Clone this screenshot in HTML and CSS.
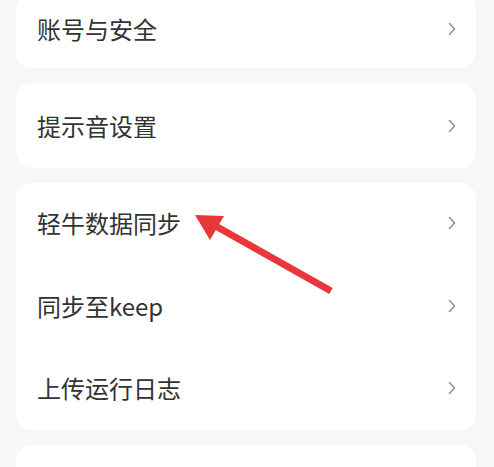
FILE: index.html
```html
<!DOCTYPE html>
<html>
<head>
    <meta charset="UTF-8">
    <meta name="viewport" content="width=device-width, initial-scale=1.0">
    <title>设置</title>
    <link rel="stylesheet" href="styles.css">
</head>
<body>
    <div class="settings">
        <div class="card first">
            <div class="row tall-first">
                <span class="label">账号与安全</span>
                <svg class="chevron" viewBox="0 0 8 14"><polyline points="1.5,1.5 6.5,7 1.5,12.5"/></svg>
            </div>
        </div>
        <div class="card">
            <div class="row tall">
                <span class="label">提示音设置</span>
                <svg class="chevron" viewBox="0 0 8 14"><polyline points="1.5,1.5 6.5,7 1.5,12.5"/></svg>
            </div>
        </div>
        <div class="card group">
            <div class="row">
                <span class="label">轻牛数据同步</span>
                <svg class="chevron" viewBox="0 0 8 14"><polyline points="1.5,1.5 6.5,7 1.5,12.5"/></svg>
            </div>
            <div class="row">
                <span class="label">同步至keep</span>
                <svg class="chevron" viewBox="0 0 8 14"><polyline points="1.5,1.5 6.5,7 1.5,12.5"/></svg>
            </div>
            <div class="row">
                <span class="label">上传运行日志</span>
                <svg class="chevron" viewBox="0 0 8 14"><polyline points="1.5,1.5 6.5,7 1.5,12.5"/></svg>
            </div>
        </div>
        <div class="card">
            <div class="row tall"></div>
        </div>
    </div>
    <!-- annotation arrow over the list -->
    <svg class="pointer" width="494" height="467" viewBox="0 0 494 467">
        <line x1="331" y1="291" x2="212" y2="224"/>
        <polygon points="195,215 224,216 210,240"/>
    </svg>
</body>
</html>
```

FILE: styles.css
```css
body {
    margin: 0;
    overflow: hidden;
    background-color: #f6f7f9;
    font-family: "Noto Sans CJK SC", "Noto Sans", sans-serif;
    position: relative;
    height: 467px;
}
.settings {
    display: flex;
    flex-direction: column;
    gap: 15px;
    padding: 0 18px 0 16px;
}
.card {
    background-color: white;
    border-radius: 16px;
}
.card.first {
    margin-top: -8px;
}
.card.group {
    padding-bottom: 1px;
}
.row {
    height: 82px;
    display: flex;
    align-items: center;
    justify-content: space-between;
    padding: 0 20px 0 21px;
}
.row.tall-first {
    height: 76px;
    padding-bottom: 2px;
    box-sizing: border-box;
}
.row.tall {
    height: 85px;
    padding-top: 1px;
    box-sizing: border-box;
}
.group .row:first-child {
    padding-bottom: 3px;
    box-sizing: border-box;
}
.label {
    font-size: 24px;
    color: #333333;
    line-height: 1;
}
.chevron {
    width: 8px;
    height: 14px;
    fill: none;
    stroke: #949494;
    stroke-width: 1.6;
    stroke-linecap: round;
    stroke-linejoin: round;
}
.pointer {
    position: absolute;
    left: 0;
    top: 0;
}
.pointer line {
    stroke: #e8363a;
    stroke-width: 7;
}
.pointer polygon {
    fill: #e8363a;
}
```
